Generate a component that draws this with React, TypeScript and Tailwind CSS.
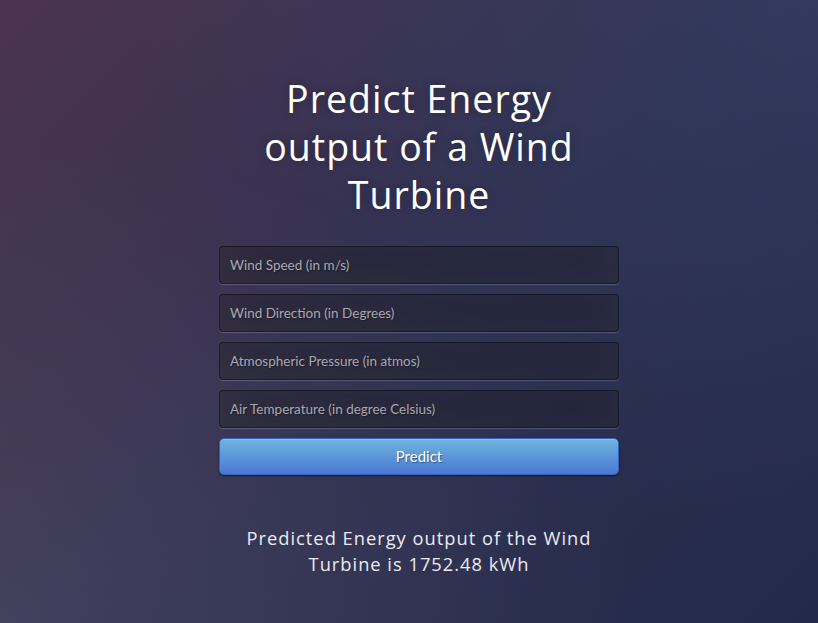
import React, { useState } from 'react';

const fields = [
  { name: 'wind_speed', placeholder: 'Wind Speed (in m/s)' },
  { name: 'wind_direction', placeholder: 'Wind Direction (in Degrees)' },
  { name: 'pressure', placeholder: 'Atmospheric Pressure (in atmos)' },
  { name: 'air_temperature', placeholder: 'Air Temperature (in degree Celsius)' },
];

const App: React.FC = () => {
  const [values, setValues] = useState<Record<string, string>>({});

  return (
    <div className="min-h-screen w-full bg-[radial-gradient(ellipse_at_0%_100%,rgba(95,95,115,0.35),rgba(95,95,115,0)_55%),radial-gradient(ellipse_at_100%_0%,rgba(55,75,115,0.4),rgba(55,75,115,0)_60%),linear-gradient(135deg,#4b3450_0%,#2e2f4f_55%,#222a4b_100%)] pl-[20px] font-['Open_Sans',sans-serif]">
      <div className="mx-auto w-[400px] pt-[75px]">
        <h1 className="mx-auto mb-[27px] w-[330px] text-center text-[37.5px] leading-[48px] tracking-[1px] text-white [text-shadow:0_0_10px_rgba(0,0,0,0.3)]">
          Predict Energy output of a Wind Turbine
        </h1>
        <form onSubmit={e => e.preventDefault()}>
          {fields.map(f => (
            <input
              key={f.name}
              name={f.name}
              type="text"
              placeholder={f.placeholder}
              value={values[f.name] || ''}
              onChange={e => setValues({ ...values, [f.name]: e.target.value })}
              className="mb-[10px] block h-[38px] w-full rounded-[4px] border border-[rgba(0,0,0,0.3)] bg-[rgba(0,0,0,0.3)] px-[10px] font-['Lato',sans-serif] text-[13.5px] text-white outline-none shadow-[inset_0_-5px_45px_rgba(100,100,100,0.2),0_1px_1px_rgba(255,255,255,0.2)] placeholder:text-[#a8a8b2] [text-shadow:1px_1px_1px_rgba(0,0,0,0.3)]"
            />
          ))}
          <button
            type="submit"
            className="block h-[37px] w-full rounded-[5px] border border-[#3762bc] bg-[linear-gradient(to_bottom,#6eb6de,#4a77d4)] font-['Lato',sans-serif] text-[15px] text-white shadow-[inset_0_1px_0_rgba(255,255,255,0.2),0_1px_2px_rgba(0,0,0,0.5)] [text-shadow:1px_1px_1px_rgba(0,0,0,0.4)]"
          >
            Predict
          </button>
        </form>
        <p className="mt-[50px] text-center text-[18.3px] leading-[26px] tracking-[1px] text-[#eceaf2]">
          Predicted Energy output of the Wind Turbine is 1752.48 kWh
        </p>
      </div>
    </div>
  );
};

export default App;
